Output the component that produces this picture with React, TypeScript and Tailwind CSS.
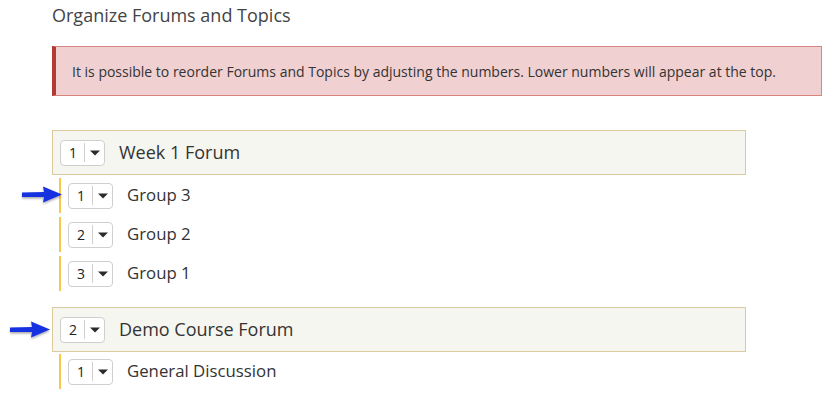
import React from "react";

function NumSelect({ n }: { n: number }) {
  return (
    <div className="relative flex h-[26px] w-[45px] shrink-0 items-center rounded-[4px] border border-[#cfcfcf] bg-white">
      <span className="w-[23px] pl-[8px] pt-[1px] text-[14px] leading-none text-[#222]">{n}</span>
      <span className="h-[19px] w-px bg-[#cfcfcf]" />
      <span className="flex flex-1 items-center justify-center">
        <svg width="10" height="6" viewBox="0 0 10 6">
          <path d="M0 0.5 L10 0.5 L5 5.5 Z" fill="#2b2b2b" />
        </svg>
      </span>
    </div>
  );
}

function Arrow({ className }: { className: string }) {
  return (
    <svg className={className} width="44" height="22" viewBox="0 0 44 22">
      <defs>
        <filter id="sh" x="-20%" y="-40%" width="140%" height="180%">
          <feDropShadow dx="0" dy="1.5" stdDeviation="1.2" floodColor="#000" floodOpacity="0.35" />
        </filter>
      </defs>
      <g filter="url(#sh)">
        <path d="M1 8.5 L23 8 L22 2.5 L41 10.5 L22 18.5 L23 13 L1 13 Z" fill="#1630e0" />
      </g>
    </svg>
  );
}

function Forum({ n, title }: { n: number; title: string }) {
  return (
    <div className="flex h-[45px] w-[694px] items-center border border-[#dacb9f] bg-[#f6f6f0] pl-[7px]">
      <NumSelect n={n} />
      <span className="ml-[14px] text-[18px] text-[#333]">{title}</span>
    </div>
  );
}

function Topic({ n, title }: { n: number; title: string }) {
  return (
    <div className="ml-[7px] flex h-[35px] items-center border-l-2 border-[#f7c84a] pl-[7px]">
      <NumSelect n={n} />
      <span className="ml-[14px] -translate-y-[1px] text-[16.8px] text-[#333]">{title}</span>
    </div>
  );
}

export default function App() {
  return (
    <div
      className="relative h-[412px] w-[838px] overflow-hidden bg-white pl-[52px]"
      style={{ fontFamily: '"Open Sans", "Noto Sans", sans-serif' }}
    >
      <h1 className="pt-[2px] text-[18px] leading-[26px] text-[#444]">Organize Forums and Topics</h1>
      <div className="mt-[18px] flex h-[50px] w-[770px] items-center border border-l-4 border-[#d98680] border-l-[#b23a32] bg-[#f0d0d1] pl-[16px] text-[14px] text-[#333]">
        It is possible to reorder Forums and Topics by adjusting the numbers. Lower numbers will appear at the top.
      </div>

      <div className="mt-[34px]">
        <Forum n={1} title="Week 1 Forum" />
        <div className="mt-[3px] flex flex-col gap-[4px]">
          <Topic n={1} title="Group 3" />
          <Topic n={2} title="Group 2" />
          <Topic n={3} title="Group 1" />
        </div>
      </div>

      <div className="mt-[16px]">
        <Forum n={2} title="Demo Course Forum" />
        <div className="mt-[2px] flex flex-col gap-[4px]">
          <Topic n={1} title="General Discussion" />
        </div>
      </div>

      <Arrow className="absolute left-[21px] top-[184px]" />
      <Arrow className="absolute left-[9px] top-[319px]" />
    </div>
  );
}
